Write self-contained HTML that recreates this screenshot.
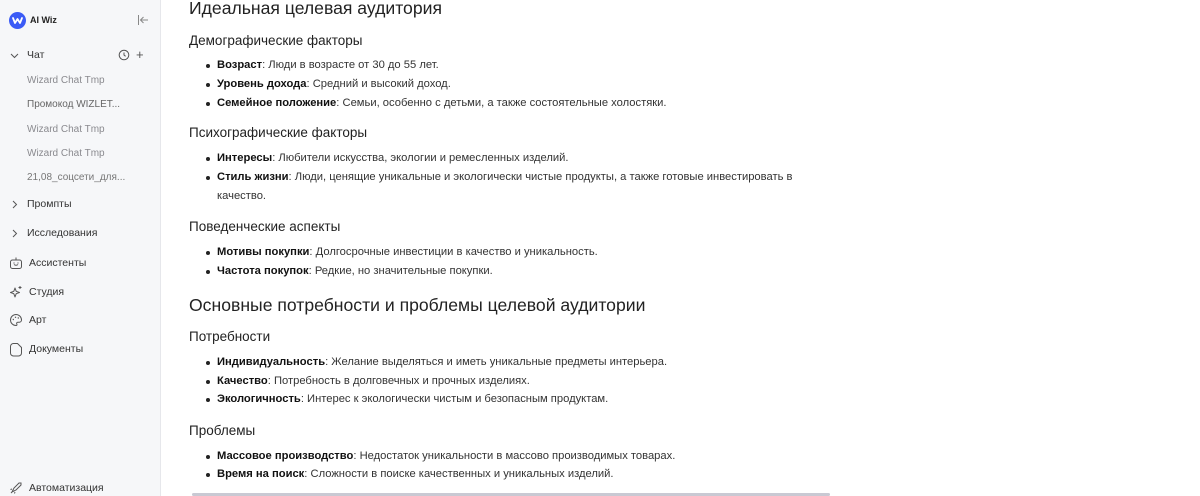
<!DOCTYPE html>
<html><head><meta charset="utf-8"><style>
*{margin:0;padding:0;box-sizing:border-box}
body{width:1200px;height:496px;overflow:hidden;background:#fff;font-family:"Liberation Sans","DejaVu Sans",sans-serif;color:#1f1f24;position:relative}
#sb{position:absolute;left:0;top:0;width:161px;height:496px;background:#f6f7f9;border-right:1px solid #e6e7eb}
.a{position:absolute;white-space:nowrap;line-height:16px;transform:translateY(-8px)}
.s{font-size:10.5px;color:#333}
.g{font-size:10px;color:#8a8a8f}
svg{position:absolute}
.h1{font-size:17.6px;color:#222}
.h3{font-size:13.5px;color:#222}
.t{font-size:11.2px;color:#333}
.t b{color:#111}
.dot{position:absolute;width:4px;height:4px;border-radius:50%;background:#222}
</style></head><body>
<div id="sb">
<div style="position:absolute;left:9px;top:12px;width:17px;height:17px;border-radius:50%;background:#3b5bf6"></div>
<svg style="left:9px;top:12px" width="17" height="17" viewBox="0 0 17 17"><path d="M4 6l2 5 2.5-4 2.5 4 2-5" stroke="#fff" stroke-width="1.8" fill="none" stroke-linecap="round" stroke-linejoin="round"/></svg>
<div class="a" style="left:30px;top:20px;font-size:9px;font-weight:bold;color:#222">AI Wiz</div>
<svg style="left:137px;top:14px" width="12" height="12" viewBox="0 0 12 12"><path d="M1.5 1v10M11 6H3.5M6.5 3L3.5 6l3 3" stroke="#888" stroke-width="1" fill="none"/></svg>
<svg style="left:10px;top:51px" width="9" height="9" viewBox="0 0 9 9"><path d="M1 3l3.5 3.5L8 3" stroke="#555" stroke-width="1" fill="none"/></svg>
<div class="a s" style="left:27px;top:55px">Чат</div>
<svg style="left:118px;top:49px" width="12" height="12" viewBox="0 0 12 12"><circle cx="6" cy="6" r="4.8" stroke="#555" fill="none"/><path d="M6 3.5V6l1.6 1.3" stroke="#555" fill="none"/></svg>
<div class="a" style="left:136px;top:55px;font-size:13px;color:#555">+</div>
<div class="a g" style="left:27px;top:81px">Wizard Chat Tmp</div>
<div class="a g" style="left:27px;top:105px;color:#666">Промокод WIZLET...</div>
<div class="a g" style="left:27px;top:130px">Wizard Chat Tmp</div>
<div class="a g" style="left:27px;top:154px">Wizard Chat Tmp</div>
<div class="a g" style="left:27px;top:178px;color:#777">21,08_соцсети_для...</div>
<svg style="left:10px;top:200px" width="9" height="9" viewBox="0 0 9 9"><path d="M3 1l3.5 3.5L3 8" stroke="#555" stroke-width="1" fill="none"/></svg>
<div class="a s" style="left:27px;top:204px">Промпты</div>
<svg style="left:10px;top:229px" width="9" height="9" viewBox="0 0 9 9"><path d="M3 1l3.5 3.5L3 8" stroke="#555" stroke-width="1" fill="none"/></svg>
<div class="a s" style="left:27px;top:233px">Исследования</div>
<svg style="left:9px;top:256px" width="14" height="14" viewBox="0 0 14 14"><rect x="1.5" y="4" width="11" height="8.5" rx="2" stroke="#555" fill="none"/><path d="M7 4V1.5M5 8.5q2 1.5 4 0" stroke="#555" fill="none"/><circle cx="5" cy="7" r=".6" fill="#555"/><circle cx="9" cy="7" r=".6" fill="#555"/></svg>
<div class="a s" style="left:29px;top:263px">Ассистенты</div>
<svg style="left:9px;top:285px" width="14" height="14" viewBox="0 0 14 14"><path d="M6 3l1.2 3.3L10.5 7.5 7.2 8.7 6 12 4.8 8.7 1.5 7.5 4.8 6.3z" stroke="#555" fill="none" stroke-linejoin="round"/><path d="M11 1v3M9.5 2.5h3" stroke="#555"/></svg>
<div class="a s" style="left:29px;top:292px">Студия</div>
<svg style="left:9px;top:313px" width="14" height="14" viewBox="0 0 14 14"><path d="M7 1.5a5.5 5.5 0 1 0 0 11c1 0 1.2-.8.8-1.5-.5-.8 0-1.8 1-1.8h1.5A2.2 2.2 0 0 0 12.5 7 5.5 5.5 0 0 0 7 1.5z" stroke="#555" fill="none"/><circle cx="4.3" cy="6.5" r=".7" fill="#555"/><circle cx="6.5" cy="4.3" r=".7" fill="#555"/><circle cx="9.3" cy="5" r=".7" fill="#555"/></svg>
<div class="a s" style="left:29px;top:320px">Арт</div>
<svg style="left:9px;top:342px" width="14" height="15" viewBox="0 0 14 15"><path d="M1.5 4.5a3 3 0 0 1 3-3h4l4 4v5.5a3 3 0 0 1-3 3h-5a3 3 0 0 1-3-3z" stroke="#555" fill="none"/></svg>
<div class="a s" style="left:29px;top:349px">Документы</div>
<svg style="left:9px;top:481px" width="14" height="14" viewBox="0 0 14 14"><path d="M3 11l2-4 5-5 2 0 0 2-5 5zM3 8L1.5 8.5M6 11l-.5 1.5M2 12l1.5-1.5" stroke="#555" fill="none"/></svg>
<div class="a s" style="left:29px;top:488px">Автоматизация</div>
</div>

<div class="a h1" style="left:189px;top:8px">Идеальная целевая аудитория</div>
<div class="a h3" style="left:189px;top:41px">Демографические факторы</div>
<div class="dot" style="left:206px;top:64px"></div><div class="a t" style="left:217px;top:65px"><b>Возраст</b>: Люди в возрасте от 30 до 55 лет.</div>
<div class="dot" style="left:206px;top:83px"></div><div class="a t" style="left:217px;top:84px"><b>Уровень дохода</b>: Средний и высокий доход.</div>
<div class="dot" style="left:206px;top:102px"></div><div class="a t" style="left:217px;top:103px"><b>Семейное положение</b>: Семьи, особенно с детьми, а также состоятельные холостяки.</div>

<div class="a h3" style="left:189px;top:133px">Психографические факторы</div>
<div class="dot" style="left:206px;top:157px"></div><div class="a t" style="left:217px;top:158px"><b>Интересы</b>: Любители искусства, экологии и ремесленных изделий.</div>
<div class="dot" style="left:206px;top:176px"></div><div class="a t" style="left:217px;top:177px"><b>Стиль жизни</b>: Люди, ценящие уникальные и экологически чистые продукты, а также готовые инвестировать в</div>
<div class="a t" style="left:217px;top:196px">качество.</div>

<div class="a h3" style="left:189px;top:227px">Поведенческие аспекты</div>
<div class="dot" style="left:206px;top:251px"></div><div class="a t" style="left:217px;top:252px"><b>Мотивы покупки</b>: Долгосрочные инвестиции в качество и уникальность.</div>
<div class="dot" style="left:206px;top:270px"></div><div class="a t" style="left:217px;top:271px"><b>Частота покупок</b>: Редкие, но значительные покупки.</div>

<div class="a h1" style="left:189px;top:305px">Основные потребности и проблемы целевой аудитории</div>
<div class="a h3" style="left:189px;top:337px">Потребности</div>
<div class="dot" style="left:206px;top:361px"></div><div class="a t" style="left:217px;top:362px"><b>Индивидуальность</b>: Желание выделяться и иметь уникальные предметы интерьера.</div>
<div class="dot" style="left:206px;top:380px"></div><div class="a t" style="left:217px;top:381px"><b>Качество</b>: Потребность в долговечных и прочных изделиях.</div>
<div class="dot" style="left:206px;top:398px"></div><div class="a t" style="left:217px;top:399px"><b>Экологичность</b>: Интерес к экологически чистым и безопасным продуктам.</div>

<div class="a h3" style="left:189px;top:431px">Проблемы</div>
<div class="dot" style="left:206px;top:455px"></div><div class="a t" style="left:217px;top:456px"><b>Массовое производство</b>: Недостаток уникальности в массово производимых товарах.</div>
<div class="dot" style="left:206px;top:473px"></div><div class="a t" style="left:217px;top:474px"><b>Время на поиск</b>: Сложности в поиске качественных и уникальных изделий.</div>
<div style="position:absolute;left:192px;top:493px;width:638px;height:3px;background:#c9c9d3;border-radius:2px"></div>
</body></html>
